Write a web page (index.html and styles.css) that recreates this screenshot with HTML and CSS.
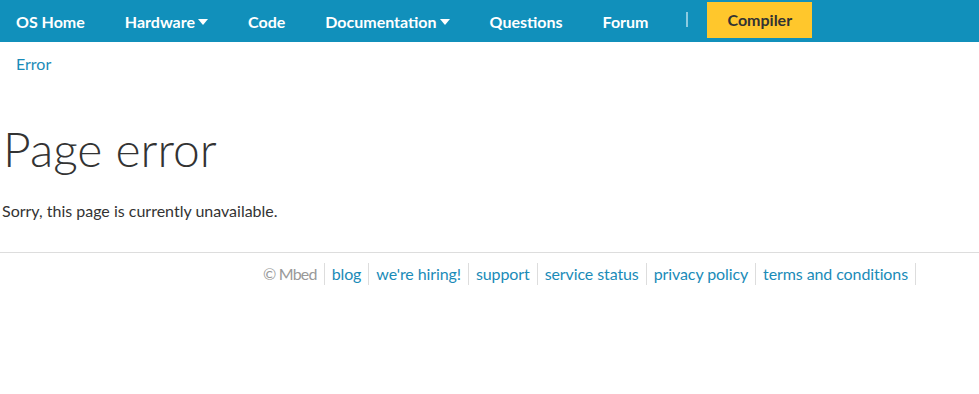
FILE: index.html
```html
<!DOCTYPE html>
<html lang="en">
<head>
    <meta charset="UTF-8">
    <meta name="viewport" content="width=device-width, initial-scale=1.0">
    <title>Page error | Mbed</title>
    <link rel="stylesheet" href="styles.css">
</head>
<body>

<nav class="topnav">
    <a class="nav-item" href="#">OS Home</a>
    <a class="nav-item" href="#">Hardware<span class="caret"></span></a>
    <a class="nav-item" href="#">Code</a>
    <a class="nav-item" href="#">Documentation<span class="caret"></span></a>
    <a class="nav-item" href="#">Questions</a>
    <a class="nav-item" href="#">Forum</a>
    <span class="nav-divider"></span>
    <a class="nav-compiler" href="#">Compiler</a>
</nav>

<div class="breadcrumb">
    <a href="#">Error</a>
</div>

<div class="content">
    <h1>Page error</h1>
    <p>Sorry, this page is currently unavailable.</p>
</div>

<footer class="footer">
    <span class="footer-item copy">&copy; Mbed</span>
    <a class="footer-item" href="#">blog</a>
    <a class="footer-item" href="#">we're hiring!</a>
    <a class="footer-item" href="#">support</a>
    <a class="footer-item" href="#">service status</a>
    <a class="footer-item" href="#">privacy policy</a>
    <a class="footer-item" href="#">terms and conditions</a>
</footer>

</body>
</html>
```

FILE: styles.css
```css
body { margin: 0; font-family: Lato, "Open Sans", sans-serif; color: #333; background: #fff; }
a { text-decoration: none; }

.topnav {
    display: flex;
    align-items: center;
    gap: 40px;
    height: 42px;
    padding-left: 16px;
    background-color: #1190bb;
}
.nav-item { color: #fff; font-size: 16px; font-weight: bold; display: flex; align-items: center; }
.caret {
    display: inline-block;
    margin-left: 3px;
    margin-top: 1px;
    border-left: 5px solid transparent;
    border-right: 5px solid transparent;
    border-top: 6px solid #fff;
}
.nav-divider { width: 2px; height: 15px; background: #8ccbe0; margin-left: -2px; margin-right: -21px; margin-top: -4px; }
.nav-compiler {
    background-color: #ffc72c;
    color: #333;
    font-size: 16px;
    font-weight: bold;
    padding: 0 20px;
    height: 36px;
    line-height: 36px;
    margin-top: -3px;
}

.breadcrumb { padding: 12px 16px 0; font-size: 16px; line-height: 20px; }
.breadcrumb a { color: #1a8bb8; }

.content { padding: 0 2px; }
.content h1 {
    font-size: 48px;
    font-weight: 300;
    line-height: 58px;
    margin: 46px 0 22px 1px;
    color: #333;
}
.content p { font-size: 16px; line-height: 22px; margin: 0; }

.footer {
    display: flex;
    justify-content: flex-end;
    padding: 10px 63px 0 0;
    margin-top: 30px;
    border-top: 1px solid #ddd;
    font-size: 16px;
    line-height: 22px;
    letter-spacing: -0.1px;
}
.footer-item { color: #1a8bb8; padding: 0 7px; border-right: 1px solid #ddd; }
.footer-item.copy { color: #999; letter-spacing: -0.8px; }
```
